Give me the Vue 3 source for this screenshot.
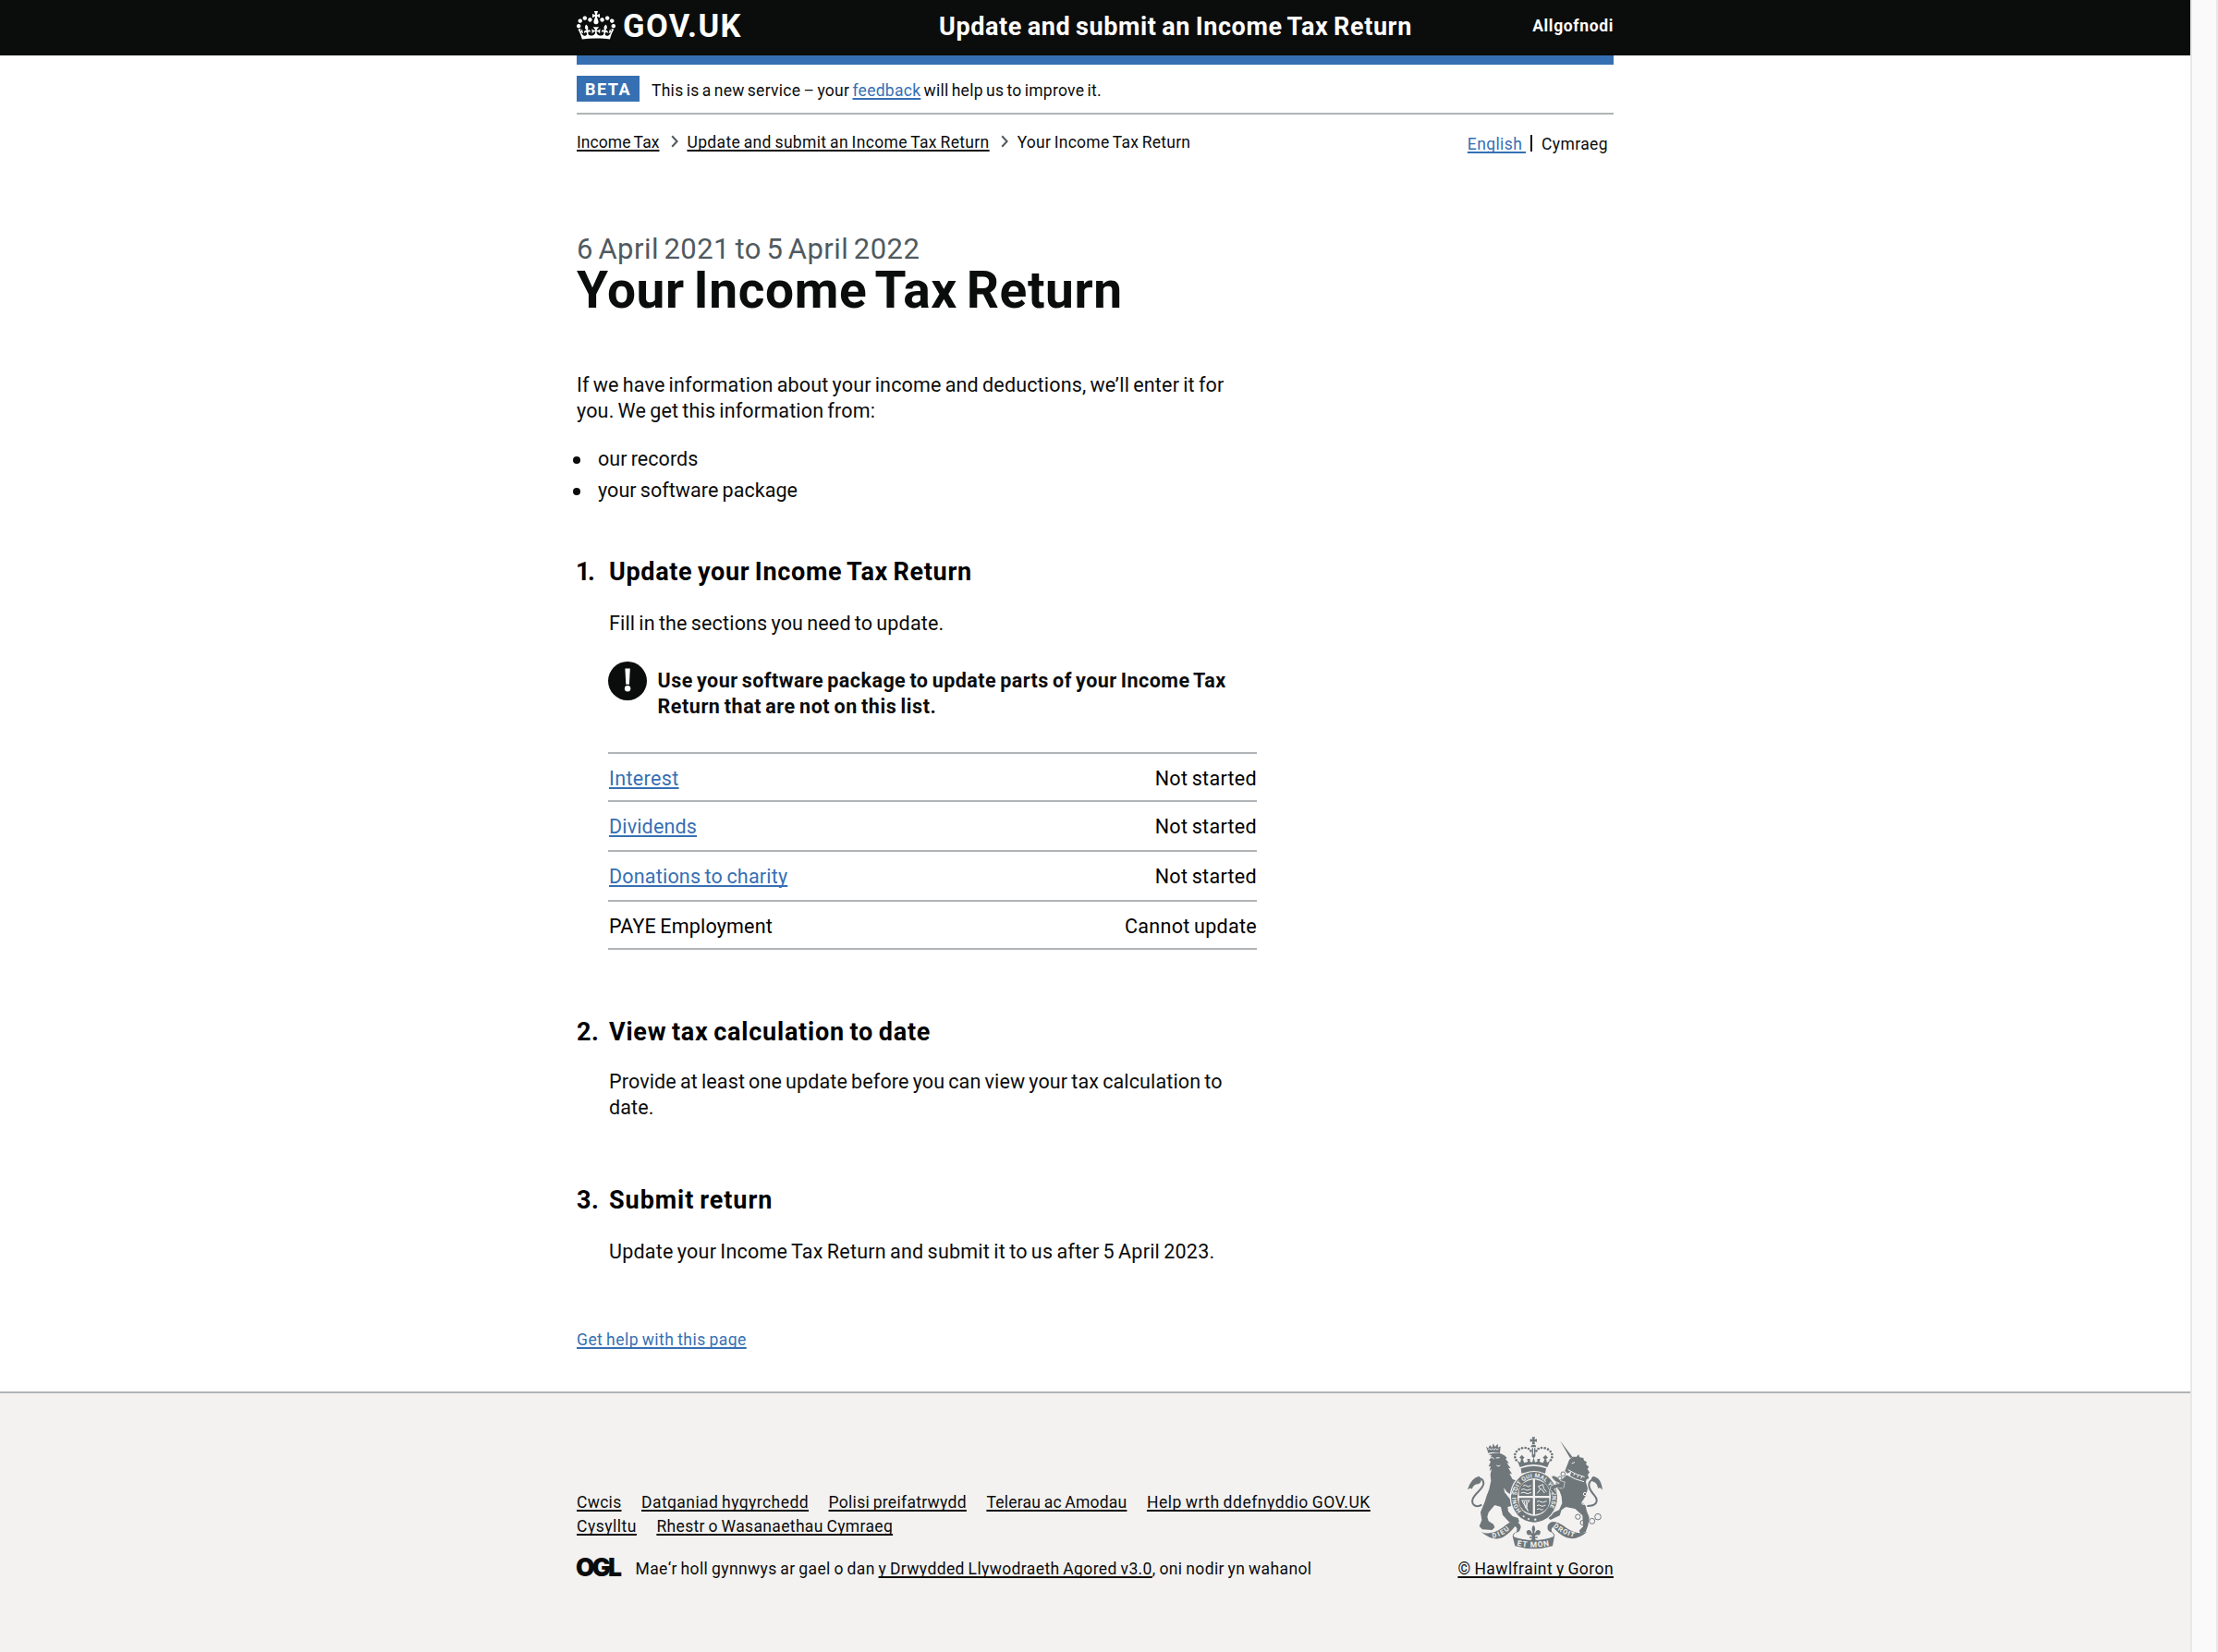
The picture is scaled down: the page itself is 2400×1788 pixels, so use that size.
<script setup>
const crumbs = [
  { text: 'Income Tax', track: 0.06 },
  { text: 'Update and submit an Income Tax Return', track: 0.34 },
]

const tasks = [
  { name: 'Interest', link: true, status: 'Not started', track: 0.35 },
  { name: 'Dividends', link: true, status: 'Not started', track: 0.16, tall: true },
  { name: 'Donations to charity', link: true, status: 'Not started', track: 0.2, tall: true },
  { name: 'PAYE Employment', link: false, status: 'Cannot update', track: 0.18 },
]

const footerLinks = [
  { text: 'Cwcis', track: 0.3 },
  { text: 'Datganiad hygyrchedd', track: 0.44 },
  { text: 'Polisi preifatrwydd', track: 0.3 },
  { text: 'Telerau ac Amodau', track: 0.22 },
  { text: 'Help wrth ddefnyddio GOV.UK', track: 0.53 },
  { text: 'Cysylltu', track: 0.5 },
  { text: 'Rhestr o Wasanaethau Cymraeg', track: 0.35 },
]

// Pearls along the left arch of the royal crown, mirrored for the right arch
const pearls = [
  [182, 97], [178, 88], [178, 78], [183, 69], [191, 62], [201, 58], [212, 57], [222, 60], [229, 67],
]
</script>

<template>
  <div class="screen">
    <div class="page">
      <header class="header">
        <div class="width header-row">
          <div class="logo">
            <svg class="crown" viewBox="0 0 132 97" aria-hidden="true">
              <path fill="currentColor" d="M25 30.2c3.5 1.5 7.7-.2 9.1-3.7 1.5-3.6-.2-7.8-3.9-9.2-3.6-1.4-7.6.3-9.1 3.9-1.4 3.5.3 7.5 3.9 9zM9 39.5c3.6 1.5 7.8-.2 9.2-3.7 1.5-3.6-.2-7.8-3.9-9.1-3.6-1.5-7.6.2-9.1 3.8-1.4 3.5.3 7.5 3.8 9zM4.4 57.2c3.5 1.5 7.7-.2 9.1-3.8 1.5-3.6-.2-7.7-3.9-9.1-3.5-1.5-7.6.3-9.1 3.8-1.4 3.5.3 7.6 3.9 9.1zm38.3-21.4c3.5 1.5 7.7-.2 9.1-3.8 1.5-3.6-.2-7.7-3.9-9.1-3.6-1.5-7.6.3-9.1 3.8-1.3 3.6.4 7.7 3.9 9.1zm64.4-5.6c-3.6 1.5-7.8-.2-9.1-3.7-1.5-3.6.2-7.8 3.8-9.2 3.6-1.4 7.7.3 9.2 3.9 1.3 3.5-.4 7.5-3.9 9zm15.9 9.3c-3.6 1.5-7.7-.2-9.1-3.7-1.5-3.6.2-7.8 3.7-9.1 3.6-1.5 7.7.2 9.2 3.8 1.5 3.5-.3 7.5-3.8 9zm4.7 17.7c-3.6 1.5-7.8-.2-9.2-3.8-1.5-3.6.2-7.7 3.9-9.1 3.6-1.5 7.7.3 9.2 3.8 1.3 3.5-.4 7.6-3.9 9.1zM89.3 35.8c-3.6 1.5-7.8-.2-9.2-3.8-1.4-3.6.2-7.7 3.9-9.1 3.6-1.5 7.7.3 9.2 3.8 1.4 3.6-.3 7.7-3.9 9.1zM69.7 17.7l8.9 4.7V9.3l-8.9 2.8c-.2-.3-.5-.6-.9-.9L72.4 0H59.6l3.5 11.2c-.3.3-.6.5-.9.9l-8.8-2.8v13.1l8.8-4.7c.3.3.6.7.9.9l-5 15.4v.1c-.2.8-.4 1.6-.4 2.4 0 4.1 3.1 7.5 7 8.1h.2c.3 0 .7.1 1 .1.4 0 .7 0 1-.1h.2c4-.6 7.1-4.1 7.1-8.1 0-.8-.1-1.7-.4-2.4V34l-5.1-15.4c.4-.2.7-.6 1-.9zM66 92.8c16.9 0 32.8 1.1 47.1 3.2 4-16.9 8.9-26.7 14-33.5l-9.6-3.4c1 4.9 1.1 7.2 0 10.2-1.5-1.4-3-4.3-4.2-8.7L108.6 76c2.8-2 5-3.2 7.5-3.3-4.4 9.4-10 11.9-13.6 11.2-4.3-.8-6.3-4.6-5.6-7.9 1-4.7 5.7-5.9 8-.5 4.3-8.7-3-11.4-7.6-8.8 7.1-7.2 7.9-13.5 2.1-21.1-8 6.1-8.1 12.3-4.5 20.8-4.7-5.4-12.1-2.5-9.5 6.2 3.4-5.2 7.9-2 7.2 3.1-.6 4.3-6.4 7.8-13.5 7.2-10.3-.9-10.9-8-11.2-13.8 2.5-.5 7.1 1.8 11 7.3L80.2 60c-4.1 4.4-8 5.3-12.3 5.4 1.4-4.4 8-11.6 8-11.6H55.5s6.4 7.2 7.9 11.6c-4.2-.1-8-1-12.3-5.4l1.4 16.4c3.9-5.5 8.5-7.7 10.9-7.3-.3 5.8-.9 12.8-11.1 13.8-7.2.6-12.9-2.9-13.5-7.2-.7-5 3.8-8.3 7.1-3.1 2.7-8.7-4.6-11.6-9.4-6.2 3.7-8.5 3.6-14.7-4.6-20.8-5.8 7.6-5 13.9 2.2 21.1-4.7-2.6-11.9.1-7.7 8.8 2.3-5.5 7.1-4.2 8.1.5.7 3.3-1.3 7.1-5.7 7.9-3.5.7-9-1.8-13.5-11.2 2.5.1 4.7 1.3 7.5 3.3l-4.7-15.4c-1.2 4.4-2.7 7.2-4.3 8.7-1.1-3-.9-5.3 0-10.2l-9.5 3.4c5 6.9 9.9 16.7 14 33.5 14.8-2.1 30.8-3.2 47.7-3.2z" />
            </svg>
            <span class="logo-text">GOV.UK</span>
          </div>
          <span class="service">Update and submit an Income Tax Return</span>
          <a class="sign-out">Allgofnodi</a>
        </div>
      </header>

      <div class="width">
        <div class="bar"></div>
        <div class="phase">
          <strong class="tag">BETA</strong>
          <span class="phase-text">This is a new service – your <a class="link">feedback</a> will help us to improve it.</span>
        </div>
        <div class="nav-row">
          <nav class="crumbs">
            <template v-for="c in crumbs" :key="c.text">
              <a class="crumb" :style="{ letterSpacing: c.track + 'px' }">{{ c.text }}</a>
              <svg class="chevron" viewBox="0 0 8 14"><path d="M1.2 1.2 6.6 7 1.2 12.8" /></svg>
            </template>
            <span class="current">Your Income Tax Return</span>
          </nav>
          <div class="langs">
            <a class="link lang-en">English&nbsp;</a><span class="pipe"></span><span class="lang-cy">Cymraeg</span>
          </div>
        </div>

        <main class="main">
          <span class="caption">6 April 2021 to 5 April 2022</span>
          <h1 class="title">Your Income Tax Return</h1>
          <p class="body intro">If we have information about your income and deductions, we’ll enter it for<br />you. We get this information from:</p>
          <ul class="bullets">
            <li>our records</li>
            <li>your software package</li>
          </ul>

          <section class="step">
            <h2 class="step-title"><span class="num one">1.</span><span class="h-update">Update your Income Tax Return</span></h2>
            <div class="step-body">
              <p class="body fill">Fill in the sections you need to update.</p>
              <div class="warning">
                <svg class="warning-icon" viewBox="0 0 42 42">
                  <circle cx="21" cy="21" r="21" fill="#0b0c0c" />
                  <path d="M18.4 7.4h5.4l-.9 17.4h-3.6z" fill="#fff" />
                  <circle cx="21.1" cy="29.2" r="3.2" fill="#fff" />
                </svg>
                <strong class="warning-text">Use your software package to update parts of your Income Tax<br /><span class="warning-end">Return that are not on this list.</span></strong>
              </div>
              <ul class="tasks">
                <li v-for="t in tasks" :key="t.name" class="task" :class="{ tall: t.tall }">
                  <span :class="{ link: t.link }" :style="{ letterSpacing: t.track + 'px' }">{{ t.name }}</span>
                  <span class="status">{{ t.status }}</span>
                </li>
              </ul>
            </div>
          </section>

          <section class="step second">
            <h2 class="step-title"><span class="num">2.</span><span class="h-view">View tax calculation to date</span></h2>
            <p class="body step-body view">Provide at least one update before you can view your tax calculation to<br />date.</p>
          </section>

          <section class="step third">
            <h2 class="step-title"><span class="num">3.</span><span class="h-submit">Submit return</span></h2>
            <p class="body step-body submit">Update your Income Tax Return and submit it to us after 5 April 2023.</p>
          </section>

          <a class="link help">Get help with this page</a>
        </main>
      </div>

      <footer class="footer">
        <div class="width footer-row">
          <div class="footer-meta">
            <nav class="footer-links">
              <a v-for="l in footerLinks" :key="l.text" :style="{ letterSpacing: l.track + 'px' }">{{ l.text }}</a>
            </nav>
            <div class="licence">
              <span class="ogl">OGL</span>
              <span>Mae‘r holl gynnwys ar gael o dan <a>y Drwydded Llywodraeth Agored v3.0</a>, oni nodir yn wahanol</span>
            </div>
          </div>
          <div class="copyright">
            <svg class="crest" viewBox="0 0 480 402" aria-hidden="true">
              <defs>
                <path id="garter-arc" d="M198.6 262A58 64 0 1 1 281.4 262" />
                <path id="motto-left" d="M106 350Q140 344 166 316" />
                <path id="motto-mid" d="M184 374Q238 386 292 374" />
                <path id="motto-right" d="M302 313Q330 338 376 350" />
              </defs>
              <g class="ink">
                <!-- royal crown -->
                <path d="M233 22h10l-2 8 8-2v10l-8-2 2 9h-10l2-9-8 2v-10l8 2zM231 49q7-5 14 0l2 6h-18z" />
                <path d="M233 58h4v26h-4zM240 58h4v26h-4z" />
                <g v-for="(p, i) in pearls" :key="i">
                  <circle :cx="p[0]" :cy="p[1]" r="4" />
                  <circle :cx="476 - p[0]" :cy="p[1]" r="4" />
                </g>
                <path d="M185 98l10 7 3-12-6-4 8-9 9 9-6 5 5 12 12-4-3-9h10l-1 8 8 3 4-14-6-5 6-8 6 8-5 5 4 14 8-3-1-8h10l-3 9 12 4 5-12-6-5 9-9 8 9-6 4 3 12 10-7-9 22Q238 102 194 120z" />
                <path d="M197 124q41-15 82 0l-3 16q-38-12-77 0z" />
                <!-- lion -->
                <path d="M84 52l7 7 5-11 8 8 3-13 6 11 9-10 1 12 8-4-2 22q-20-5-38 0z" />
                <path d="M92 79q20-9 40-3l12 6 8 8-5 3 12 14-8-1 13 18-8-2 12 20-8-1 10 18 10 4 2 16-2 20 6 18-2 12-8 2-8-20-16-10-10-14 2 14 14 18 12 14-2 12-14 4 2 14 14 16 18 6 4 12-8 4-24-2-22-24-6-26-20-6-20 24-4 14 4 14 16 10 4 10-8 9-32-2-10-10 8-20-4-26 14-34 6-20 8-20 6-28-2-20 4-18-7 6 4-16-7 2 7-16-5-5 8-15z" />
                <path class="line" d="M70 242C54 252 36 244 40 226C44 206 76 192 76 172C74 156 64 154 56 160" />
                <path d="M62 149q-26 4-38 44 10-9 14-2 6-16 20-16 18-8 4-26z" />
                <!-- unicorn -->
                <path d="M324 34l40 52-7 5z" />
                <path d="M354 96l10-10 14 0 6-8 4 10 12 2 2 8 9 5-3 7 10 9-5 6 7 12-6 7 4 12-8 4-3 12-50-24 3-14-12 6-8-8z" />
                <path d="M346 145l62 24 6 20-5 22-14 22 12 12 4 18 8 20-4 26-8 22-18 4-2-10 12-12-2-36-24-22-30-6-14 10-6 18-30 14-10-8 20-16 18-8 10-22-2-22-8-22-16-8 8-18 14-4z" />
                <path class="line" d="M412 246C440 246 452 232 436 212C420 194 412 176 424 164Q434 154 442 162" />
                <path d="M430 150q28 2 32 44-10-12-14-4-4-20-14-22-16-4-4-18z" />
                <g class="thin">
                  <circle cx="334" cy="142" r="7" /><circle cx="324" cy="156" r="6" />
                  <circle cx="382" cy="281" r="8" /><circle cx="398" cy="300" r="8" /><circle cx="428" cy="295" r="9" /><circle cx="447" cy="281" r="10" />
                </g>
                <!-- garter -->
                <ellipse cx="240" cy="217" rx="79" ry="85" class="ground" />
                <ellipse cx="240" cy="217" rx="75" ry="82" />
              </g>
              <ellipse cx="240" cy="217" rx="54" ry="61" class="ground" />
              <g class="ink">
                <path d="M191 213V194q8-28 45-34v53zM243 160q38 6 46 34v19h-46zM191 220h45v54q-38-8-45-36zM243 220h46v17q-6 30-46 37z" />
              </g>
              <g class="cut">
                <path d="M204 181q8-6 12 0t14-2M198 193q10-5 14 0t18-2M197 204q12-5 16 0t18-2M249 232q8-5 12 0t20-2M249 245q8-5 12 0t16-2M249 257q8-5 12 0t8-2M250 205l10-13-6-10 14-6 4 14 8 10M262 188l12 16M200 228h26q-18 12-6 34zM208 231l4 22M215 230l2 20" />
                <path d="M90 64l5-5 5 5 5-5 5 5 5-5 5 5 5-5M94 92l10-4 6 5M116 90l12-1M118 114q4 6 12 0M176 184l-10 24" />
                <path d="M362 108l10-4M350 128q24 16 54 24M344 143q28 18 58 24M356 140l4-7M368 147l4-8M380 153l4-8M392 157l4-8" />
                <circle cx="405" cy="207" r="5" /><circle cx="400" cy="236" r="5" />
              </g>
              <text class="garter-text"><textPath href="#garter-arc" textLength="274">HONI SOIT QUI MAL Y PENSE</textPath></text>
              <g class="ink">
                <!-- unicorn forelegs -->
                <path class="edged" d="M340 168l-14-4-10-12-14-5-6 5 12 14 14 6-16 4-12 5-2 12 16 16 7-4-10-14 10-4 20 2z" />
                <circle class="thin" cx="327" cy="190" r="7" />
                <!-- scroll -->
                <path d="M68 330q30 14 70-14 30-28 48-18 18 12 6 30l-12 6q10-16-2-22-14 20-40 36-32 14-70-18z" />
                <path d="M412 330q-30 12-66-12-36-28-54-18-16 12-4 28l12 6q-8-16 2-20 16 22 42 34 34 12 68-18z" />
                <path d="M170 344q68 26 136 0l-6 32q-62 18-122 0z" />
                <path class="thin" d="M178 332q-8 8-6 14M300 332q8 8 4 14" />
                <path d="M238 308q9 9 3 22-1 4 2 5 3-13 12-11 9 3 4 13-4 6-9 2-4 3-7 3v4h8v4h-8q0 5 5 7h-20q5-2 5-7h-8v-4h8v-4q-3 0-7-3-5 4-9-2-5-10 4-13 9-2 12 11 3-1 2-5-6-13 3-22z" />
              </g>
              <g class="cut-dot"><circle cx="222" cy="288" r="3" /><circle cx="244" cy="290" r="3.5" /><circle cx="206" cy="280" r="3" /></g>
              <text class="motto"><textPath href="#motto-left" textLength="62">DIEU</textPath></text>
              <text class="motto mid"><textPath href="#motto-mid" textLength="106">ET MON</textPath></text>
              <text class="motto"><textPath href="#motto-right" textLength="76">DROIT</textPath></text>
            </svg>
            <a class="copy-link">© Hawlfraint y Goron</a>
          </div>
        </div>
      </footer>
    </div>
    <div class="scrollbar"></div>
  </div>
</template>

<style>
body {
  background: #fff;
}
</style>

<style scoped>
.screen {
  display: flex;
  height: 1788px;
  overflow: hidden;
  font-family: Roboto, 'Liberation Sans', sans-serif;
  color: #0b0c0c;
}
.page {
  display: flex;
  flex-direction: column;
  width: 2370px;
}
.scrollbar {
  box-sizing: border-box;
  width: 30px;
  border: solid #e8e8e8;
  border-width: 0 2px;
  background: #fafafa;
}
.width {
  width: 1122px;
  margin-left: 624px;
}
.header {
  height: 60px;
  background: #0b0c0c;
  color: #fff;
}
.header-row {
  display: flex;
  height: 56px;
}
.logo {
  display: flex;
  width: 392px;
}
.crown {
  width: 42px;
  height: 31px;
  margin-top: 12px;
}
.logo-text {
  margin: 8px 0 0 8px;
  font-size: 34.5px;
  line-height: 40px;
  font-weight: 700;
  letter-spacing: 1.4px;
}
.service {
  flex: 1;
  padding-top: 13px;
  font-size: 27px;
  line-height: 32px;
  font-weight: 700;
  letter-spacing: 0.62px;
  word-spacing: -1.7px;
}
.sign-out {
  padding-top: 16px;
  font-size: 17.5px;
  line-height: 24px;
  font-weight: 700;
  letter-spacing: 0.65px;
}
.bar {
  height: 10px;
  background: #3670b3;
}
.phase {
  display: flex;
  gap: 13px;
  height: 28px;
  padding: 12px 0;
  border-bottom: 2px solid #b1b4b6;
  font-size: 17.5px;
}
.tag {
  box-sizing: border-box;
  width: 68px;
  padding-left: 9px;
  background: #3670b3;
  color: #fff;
  font-size: 18px;
  line-height: 29px;
  letter-spacing: 1.5px;
}
.phase-text {
  line-height: 32px;
  letter-spacing: 0.27px;
  word-spacing: -1.4px;
}
.link,
.crumb,
.footer a {
  text-decoration: underline;
  text-decoration-thickness: 2px;
  text-underline-offset: 2px;
  text-decoration-skip-ink: none;
}
.link {
  color: #3670b3;
}
.nav-row {
  display: flex;
  justify-content: space-between;
  padding-top: 18px;
  height: 111px;
  font-size: 17.5px;
  line-height: 24px;
  word-spacing: -1px;
}
.crumbs {
  display: flex;
}
.chevron {
  width: 8px;
  height: 14px;
  margin: 4px 9.5px 0 12.5px;
  fill: none;
  stroke: #505a5f;
  stroke-width: 2;
}
.current {
  letter-spacing: 0.25px;
}
.langs {
  display: flex;
  padding: 2px 6px 0 0;
}
.lang-en {
  letter-spacing: 0.4px;
}
.pipe {
  width: 2px;
  height: 18px;
  margin: 2px 10px 0 5px;
  background: #0b0c0c;
}
.lang-cy {
  letter-spacing: 0.4px;
}
.main {
  display: flex;
  flex-direction: column;
  align-items: flex-start;
}
.caption {
  font-size: 31px;
  line-height: 34px;
  letter-spacing: 0.45px;
  word-spacing: -2.6px;
  color: #505a5f;
}
.title {
  margin: -1px 0 61px;
  font-size: 55px;
  line-height: 56px;
  font-weight: 700;
  letter-spacing: 0.62px;
  word-spacing: -4.5px;
}
.body {
  margin: 0;
  font-size: 21.5px;
  line-height: 28px;
  letter-spacing: 0.17px;
  word-spacing: -1.4px;
}
.bullets {
  display: flex;
  flex-direction: column;
  gap: 6px;
  margin: 24px 0 58px;
  padding: 0;
  list-style: none;
  font-size: 21.5px;
  line-height: 28px;
  letter-spacing: 0.05px;
  word-spacing: -1.2px;
}
.bullets li {
  display: flex;
  align-items: center;
}
.bullets li::before {
  content: '';
  width: 8px;
  height: 8px;
  margin: 2px 19px 0 -4px;
  border-radius: 50%;
  background: #0b0c0c;
}
.step {
  width: 736px;
}
.step-title {
  display: flex;
  margin: 0;
  font-size: 27px;
  line-height: 32px;
  font-weight: 700;
  word-spacing: -1.8px;
  color: #000;
}
.num {
  width: 35px;
  letter-spacing: 0.6px;
}
.num.one {
  letter-spacing: -2.5px;
  text-indent: -1px;
}
.h-update {
  letter-spacing: 0.67px;
}
.h-view {
  letter-spacing: 0.77px;
}
.h-submit {
  letter-spacing: 0.95px;
}
.step-body {
  margin-left: 35px;
}
.fill {
  margin: 26px 0 27px;
}
.warning {
  display: flex;
  gap: 11.5px;
  margin-left: -1px;
}
.warning-icon {
  width: 42px;
  height: 42px;
}
.warning-text {
  padding-top: 7px;
  font-size: 21.5px;
  line-height: 28px;
  letter-spacing: 0.46px;
  word-spacing: -1.6px;
}
.warning-end {
  letter-spacing: 0.55px;
}
.tasks {
  width: 702px;
  margin: 35px 0 0 -1px;
  padding: 0;
  border-top: 2px solid #b1b4b6;
  list-style: none;
  font-size: 21.5px;
  line-height: 28px;
  word-spacing: -1.2px;
  color: #000;
}
.task {
  box-sizing: border-box;
  display: flex;
  justify-content: space-between;
  height: 52px;
  padding: 13px 0 0 1px;
  border-bottom: 2px solid #b1b4b6;
}
.task.tall {
  height: 54px;
}
.status {
  letter-spacing: 0.3px;
}
.second {
  margin-top: 73px;
}
.view {
  margin-top: 24px;
  letter-spacing: 0.13px;
}
.third {
  margin-top: 70px;
}
.submit {
  margin-top: 26px;
  letter-spacing: 0.23px;
}
.help {
  margin-top: 69px;
  font-size: 17.5px;
  line-height: 24px;
  letter-spacing: 0.46px;
  word-spacing: -1px;
}
.footer {
  flex: 1;
  margin-top: 44px;
  border-top: 2px solid #b1b4b6;
  background: #f3f2f1;
  font-size: 17.5px;
  line-height: 26px;
  word-spacing: -1px;
}
.footer-row {
  display: flex;
  justify-content: space-between;
}
.footer-meta {
  width: 900px;
  padding-top: 105px;
}
.footer-links {
  display: flex;
  flex-wrap: wrap;
  column-gap: 21.5px;
}
.licence {
  display: flex;
  margin-top: 20px;
  letter-spacing: 0.39px;
}
.ogl {
  width: 63.5px;
  font-family: Inter, sans-serif;
  font-size: 26.5px;
  font-weight: 900;
  line-height: 22px;
  letter-spacing: -2.8px;
  text-indent: -1px;
}
.copyright {
  display: flex;
  flex-direction: column;
  align-items: flex-end;
  padding-top: 40px;
}
.crest {
  width: 160px;
  height: 134px;
  margin: 0 6px 3px 0;
}
.copy-link {
  letter-spacing: 0.45px;
}
.ink {
  fill: #6f777b;
}
.line {
  fill: none;
  stroke: #6f777b;
  stroke-width: 6;
}
.thin {
  fill: none;
  stroke: #6f777b;
  stroke-width: 3;
}
.ground {
  fill: #f3f2f1;
}
.edged {
  stroke: #f3f2f1;
  stroke-width: 2;
}
.cut {
  fill: none;
  stroke: #f3f2f1;
  stroke-width: 3;
}
.cut-dot {
  fill: #f3f2f1;
}
.garter-text {
  fill: #f3f2f1;
  font-size: 19px;
  font-weight: 700;
  word-spacing: 0;
}
.motto {
  fill: #f3f2f1;
  font-size: 22px;
  font-weight: 700;
  word-spacing: 0;
}
.motto.mid {
  font-size: 25px;
}
</style>
